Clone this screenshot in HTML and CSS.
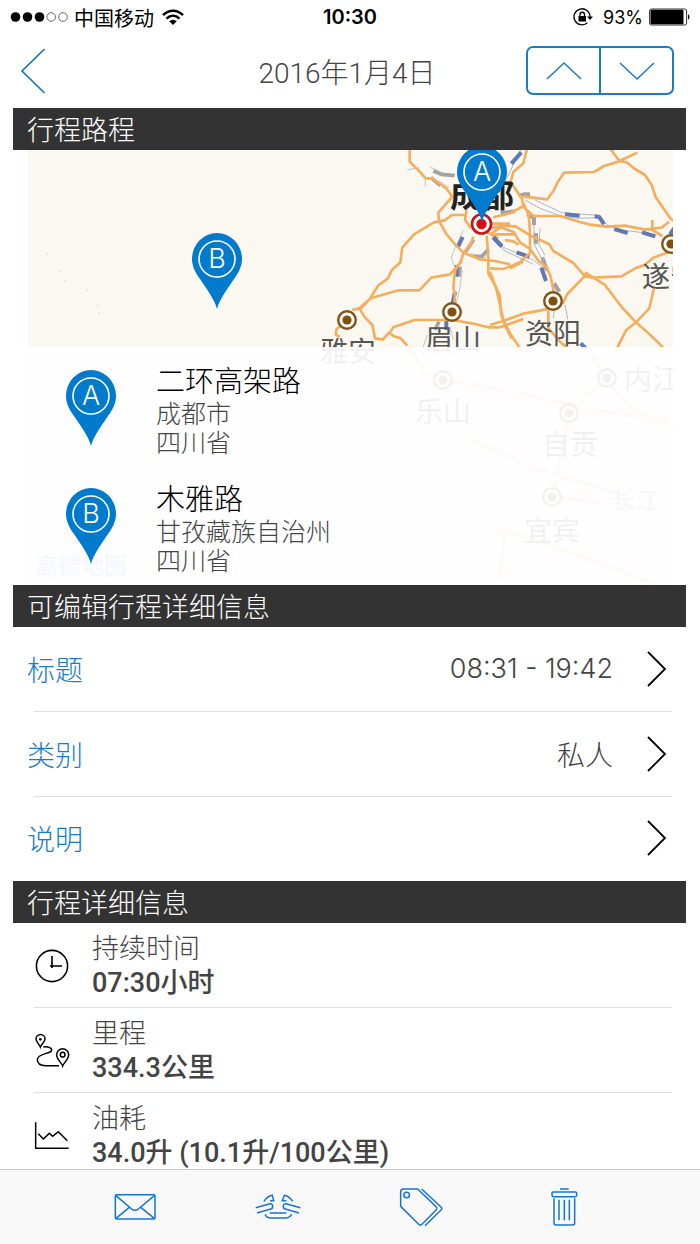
FILE: index.html
```
<!DOCTYPE html>
<html lang="zh-CN">
<head>
<meta charset="utf-8">
<meta name="viewport" content="width=device-width, initial-scale=1">
<title>2016年1月4日</title>
<link rel="stylesheet" href="styles.css">
</head>
<body>
<svg width="0" height="0" class="defs" aria-hidden="true">
  <symbol id="pin" viewBox="0 0 52 78"><path d="M26 77C24 68 15 56 9 47C4 40 1 34 1 27A25 26 0 0 1 51 27C51 34 48 40 43 47C37 56 28 68 26 77Z" fill="#007acc"/><circle cx="26" cy="27" r="18" fill="none" stroke="#fff" stroke-width="1.6"/></symbol>
  <symbol id="town" viewBox="-11 -11 22 22"><circle r="8.8" fill="#fffdf5" stroke="#80551d" stroke-width="2.4"/><circle r="4.6" fill="#80500f"/></symbol>
  <symbol id="chevron" viewBox="0 0 20 36"><path d="M1 1L18 18L1 35" fill="none" stroke="currentColor" stroke-width="1.8"/></symbol>
</svg>
<div class="app">
  <div class="status">
    <div class="status-left">
      <svg width="60" height="12" viewBox="0 0 60 12"><circle cx="5.5" cy="6" r="4.8"/><circle cx="17.5" cy="6" r="4.8"/><circle cx="29.5" cy="6" r="4.8"/><circle cx="41.2" cy="6" r="4.3" fill="none" stroke="#444" stroke-width=".8"/><circle cx="53" cy="6" r="4.3" fill="none" stroke="#444" stroke-width=".8"/></svg>
      <span>中国移动</span>
      <svg class="wifi" width="22" height="17" viewBox="0 0 22 17" fill="none" stroke="#000" stroke-width="2.5"><path d="M1 6.2C7 .2 15 .2 21 6.2M4.5 9.6C8.500 5.800 13.500 5.800 17.500 9.600"/><path d="M7.200 12.300Q11 9 14.800 12.300L11 16Z" fill="#000" stroke="none"/></svg>
    </div>
    <span class="clock">10:30</span>
    <div class="status-right">
      <svg width="20" height="18" viewBox="0 0 20 18" fill="none" stroke="#000" stroke-width="1.3"><path d="M14.500 14.600A8 8 0 1 1 17 9"/><path d="M14 8.500h6L17 12Z" fill="#000" stroke="none"/><rect x="5.500" y="8" width="7.500" height="5.500" fill="#000" stroke="none"/><path d="M7 8V6.500a2.250 2.250 0 0 1 4.500 0V8"/></svg>
      <span>93%</span>
      <svg width="42" height="18" viewBox="0 0 42 18"><rect x=".6" y="1" width="37" height="16" rx="2" fill="none" stroke="#333"/><rect x="1.500" y="1.800" width="33" height="14.400" rx="1"/><path d="M39 6q3 3 0 6Z"/></svg>
    </div>
  </div>
  <header class="nav">
    <button class="back" aria-label="返回"><svg width="26" height="46" viewBox="0 0 26 46"><path d="M24.500 1L2 23L24.500 45" fill="none" stroke="currentColor" stroke-width="1.600"/></svg></button>
    <h1>2016年1月4日</h1>
    <div class="stepper">
      <button aria-label="上一个"><svg width="36" height="20" viewBox="0 0 36 20"><path d="M1 18L18 2L35 18" fill="none" stroke="currentColor" stroke-width="1.500"/></svg></button>
      <button aria-label="下一个"><svg width="36" height="20" viewBox="0 0 36 20"><path d="M1 2L18 18L35 2" fill="none" stroke="currentColor" stroke-width="1.500"/></svg></button>
    </div>
  </header>
  <main>
    <section>
      <h2>行程路程</h2>
      <div class="route">
        <svg class="map" viewBox="28 150 645 435" preserveAspectRatio="xMidYMin slice" role="img" aria-label="路线地图">
          <rect x="28" y="150" width="645" height="435" fill="#faf8f1"/>
          <g transform="translate(320 145) scale(.3333)" fill="none" stroke-linejoin="round">
            <g stroke="#a5a8ad" stroke-width="2"><path d="M262 74l38-5M316 102v22M330 66l38 18M358 108l30 20M430 255l-24 52-12 30 8 25 25 15-8 55-14 58M452 325l42 14 16-22M322 570l-14 40M390 545l10 40"/></g>
            <g stroke="#a3a3a3" stroke-width="11"><path d="M340 78l24 10 40 4M333 98l28 24M461 284l-24 36M504 314l-18 20h-26M420 365l-3 30M357 530l-12 25"/></g>
            <g stroke="#6079b4" stroke-width="12"><path d="M428 276l-14 30M410 360v35M405 440l-7 35M379 525v30M520 278l25 26"/></g>
            <g stroke="#f3ae5f" stroke-width="8"><path d="M269 0v50l30 30 18 20h20l42 30 18 25-42 48 2 25 23 40 25 30 25 25 50 20 45 5 45 10M570 370l40-20"/><path d="M440 210h-44l-22 16-32 6-60 36-35 40-6 44-26 24-12 25-28 20-25 40-29 32M118 490l34-30 42-12 42-12h62l36-38 56-10 18-20 18-20M460 275l-6 20-23 28-9 27-16 25-4 30-2 25 5 20-4 65M440 195l-5 30 18 25M500 272l5 65v48l20 35 14 30 4 55 12 36 20 40M397 525l58 10 50 12h35l70-25M397 525h-113l-38 13-25 8-13 18 14 10 20 6 20 22M118 490l15 25 24 25 8 40 24 4 18-22M118 490l-22 5M65 540l-15 12-3 16 12 8M508 250l60-12M516 236h54M524 268h60M500 260l35 20"/></g>
          </g>
          <g transform="translate(490 145) scale(.3333)" fill="none" stroke-linejoin="round">
            <g stroke="#8994a9" stroke-width="2"><path d="M92 15L50 100M105 165l45 25 70 26 50 4 60-2M135 165l80 38 48 4 62 4 28 30 35 14 48 5 60 9M10 272l30 35 90 38 35 28M5 280l40 38 86 40M132 230v65l22 45 15 10M150 250l-3 50 18 30M195 485l-5 35M225 480l8 42"/></g>
            <g stroke="#6079b4" stroke-width="12"><path d="M94 22L64 56M225 208l44 4M314 214l14 2 14 22M373 252l40 12M456 262l40 12M10 276l26 28M80 322l38 14M154 368l14 40M272 595l18 18M540 268l14-20"/></g>
            <g stroke="#a3a3a3" stroke-width="12"><path d="M32 205l42-6M86 152l16-4h18M112 208l20 12v20M138 264v32M157 337l14 40M192 415l16 25"/></g>
            <g stroke="#f3ae5f" stroke-width="8"><path d="M110 15l-10 40-30 26-8 30 34 50 4 22-40 22-50 12M100 155l72 8 20-28 10-22 20-30 90-2 30-18 40-12 60-28M360 10l28 38 22 4 25 20 30 18 20 30 12 36 45 65 30 20M100 185l30 28h80l60 18 30 8 50 6 55-3 60 12 50-6 22-18M487 225v30l30 18M100 175l16 34 4 50v65l-30 28-50 20-40-2M28 240l50 5 40 25 60 28 12 20 60 36 35 40 24 4 85-4 42-24 28-10 26-22 55-20M0 270l32-24 40 16 18 30 30 20 25 35 25 20 12 28 10 50M45 285l25 4 15 10M292 385l-60 62-14 30M185 490l-85 16-60 22-40 12M0 380l20 55 10 45 10 45 20 40 40 60M285 382l60 38 50 66 42 45 30 26 52 50M492 430l-14 60-40 42-30 24-30 60M175 480v70l40 45 30 25"/></g>
          </g>
          <g fill="#e4e2dc"><circle cx="47" cy="254" r="1"/><circle cx="60" cy="271" r="1"/><circle cx="65" cy="281" r="1"/><circle cx="87" cy="290" r="1"/><circle cx="98" cy="306" r="1"/><circle cx="99" cy="313" r="1"/></g>
          <g fill="none" stroke="#f3d49b" stroke-width="4"><path d="M410 347l15 28 18 5 60 10 90 20 75 10M590 350l15 28 20 24 30 20 18 4M607 378l-38 34-16 85 100 12M470 440l70 30 80 24M500 580l5-50 60 20 90 34"/></g>
          <g class="places">
            <text class="capital" x="450" y="207">成都</text><text x="320" y="362">雅安</text><text x="425" y="350">眉山</text><text x="525" y="344">资阳</text><text x="642" y="287">遂宁</text>
            <text x="415" y="422">乐山</text><text x="624" y="390">内江</text><text x="542" y="455">自贡</text><text x="524" y="541">宜宾</text><text class="river" x="611" y="509">长江</text>
            <text class="brand" x="35" y="574">高德地图</text>
          </g>
          <use href="#town" x="336" y="309" width="22" height="22"/><use href="#town" x="441" y="301" width="22" height="22"/><use href="#town" x="542" y="290" width="22" height="22"/><use href="#town" x="660" y="233" width="22" height="22"/>
          <use href="#town" x="432" y="369" width="22" height="22"/><use href="#town" x="596" y="367" width="22" height="22"/><use href="#town" x="558" y="402" width="22" height="22"/><use href="#town" x="541" y="486" width="22" height="22"/>
          <circle cx="481.500" cy="224" r="9.500" fill="#fff" stroke="#c9131a" stroke-width="2.600"/><circle cx="481.500" cy="224" r="5.200" fill="#d80c14"/>
          <use href="#pin" x="456" y="145" width="52" height="78"/><text class="pin-letter" x="482" y="181">A</text>
          <use href="#pin" x="191" y="232" width="52" height="78"/><text class="pin-letter" x="217" y="268">B</text>
        </svg>
        <ol class="stops">
          <li><svg width="52" height="78" viewBox="0 0 52 78"><use href="#pin" width="52" height="78"/><text class="pin-letter" x="26" y="36">A</text></svg>
            <div><strong>二环高架路</strong><span>成都市</span><span>四川省</span></div></li>
          <li><svg width="52" height="78" viewBox="0 0 52 78"><use href="#pin" width="52" height="78"/><text class="pin-letter" x="26" y="36">B</text></svg>
            <div><strong>木雅路</strong><span>甘孜藏族自治州</span><span>四川省</span></div></li>
        </ol>
      </div>
    </section>
    <section>
      <h2>可编辑行程详细信息</h2>
      <div class="rows">
        <button class="row"><span class="label">标题</span><span class="value time">08:31 - 19:42</span><svg width="20" height="36"><use href="#chevron"/></svg></button>
        <button class="row"><span class="label">类别</span><span class="value">私人</span><svg width="20" height="36"><use href="#chevron"/></svg></button>
        <button class="row"><span class="label">说明</span><span class="value"></span><svg width="20" height="36"><use href="#chevron"/></svg></button>
      </div>
    </section>
    <section>
      <h2>行程详细信息</h2>
      <dl class="details">
        <div class="detail"><svg width="36" height="36" viewBox="0 0 36 36" fill="none" stroke="#000" stroke-width="1.600"><circle cx="18" cy="18" r="15.600"/><path d="M18 8v12M16 18h12"/></svg><dt>持续时间</dt><dd>07:30小时</dd></div>
        <div class="detail"><svg width="36" height="36" viewBox="103 68 108 108" fill="none" stroke="#000" stroke-width="4.500"><path d="M122 110C119 102 109 95 109 86a13.500 13.500 0 0 1 27 0C136 95 125 102 122 110ZM189 167C185 156 171 147 171 133a18 18 0 0 1 36 0C207 147 193 156 189 167Z"/><circle cx="122" cy="87" r="4" fill="#000" stroke="none"/><circle cx="189" cy="133" r="7"/><path d="M131 110C146 108 159 113 155 122C150 130 114 130 113 147C113 160 123 166 138 166H178"/></svg><dt>里程</dt><dd>334.3公里</dd></div>
        <div class="detail"><svg width="36" height="36" viewBox="104 320 108 108" fill="none" stroke="#000" stroke-width="4.500"><path d="M109 333V411H208M117 367l15 16 18-17 10 9 17-14 27 27"/></svg><dt>油耗</dt><dd>34.0升 (10.1升/100公里)</dd></div>
      </dl>
    </section>
  </main>
  <nav class="tools">
    <button aria-label="邮件"><svg width="44" height="30" viewBox="100 81 132 90"><rect x="107" y="89" width="119" height="73" rx="4"/><path d="M108 91L156 132Q166 140 176 132L225 91M109 160L149 127M224 160L183 127"/></svg></button>
    <button aria-label="合并"><svg width="48" height="30" viewBox="524 79 144 90"><path d="M554 107Q564 92 579 89L583 105H572M640 107Q630 92 615 89L609 105H621M529 126L572 114C582 113 583 128 574 130L533 142M663 126L620 114C610 113 609 128 618 130L659 142M571 142H621M557 146Q562 157 574 157H618Q630 157 637 146"/></svg></button>
    <button aria-label="标签"><svg width="46" height="42" viewBox="114 61 138 126"><path d="M122 79Q122 70 131 70H173L229 124Q232 128 229 132L186 176Q181 181 176 176L122 122ZM185 70L243 124Q248 129 243 133L195 180"/><circle cx="140" cy="88" r="8.500"/></svg></button>
    <button aria-label="删除"><svg width="30" height="42" viewBox="571 61 90 126"><path d="M604 70H630M586 98V172Q586 178 593 178H641Q648 178 648 172V98M601 102V164M617 102V164M632 102V164"/><rect x="580" y="79" width="74" height="14" rx="4"/></svg></button>
  </nav>
</div>
</body>
</html>
```
FILE: styles.css
```
* { box-sizing: border-box; }
body {
  margin: 0;
  background: #fff;
  color: #444;
  font-family: Roboto, "Noto Sans CJK SC", sans-serif;
  font-weight: 300;
}
button {
  margin: 0;
  padding: 0;
  border: 0;
  background: none;
  color: inherit;
  font: inherit;
}
svg { flex: none; display: block; }
.defs { position: absolute; }
.app { display: flex; flex-direction: column; height: 100vh; }

.status {
  display: grid;
  grid-template-columns: 1fr auto 1fr;
  align-items: center;
  height: 36px;
  padding: 0 10px 2px;
  color: #000;
  font-family: Inter, "Noto Sans CJK SC", sans-serif;
  font-size: 18px;
  font-weight: 400;
}
.status-left, .status-right { display: flex; align-items: center; }
.status-left { gap: 4px; font-size: 20px; }
.wifi { margin-left: 4px; }
.status-right { justify-content: flex-end; gap: 8px; }
.status-right svg:first-child { margin-right: 2px; }
.status-right svg:last-child { margin-right: -1px; margin-left: -2px; }
.clock { font-size: 20px; font-weight: 600; }

.nav {
  display: grid;
  grid-template-columns: 1fr auto 1fr;
  align-items: center;
  height: 72px;
  flex: none;
  padding: 0 26px 3px 20px;
}
.nav h1 { margin: 0; font-size: 28px; font-weight: 300; }
.back { justify-self: start; color: #0f74bc; }
.stepper {
  display: flex;
  justify-self: end;
  width: 148px;
  height: 49px;
  border: 2px solid #1b7cc2;
  border-radius: 7px;
  color: #1b7cc2;
}
.stepper button { flex: 1; display: grid; place-items: center; }
.stepper button + button { border-left: 2px solid #1b7cc2; }

main { flex: 1; min-height: 0; overflow-y: auto; scrollbar-width: none; }
section { padding: 0 14px 0 13px; }
h2 {
  margin: 0;
  padding: 4px 0 0 14px;
  background: #333;
  color: #fff;
  font-size: 27px;
  font-weight: 300;
  line-height: 38px;
}

.route { position: relative; margin: 0 13px 0 15px; padding-top: 197px; }
.map { position: absolute; inset: 0; width: 100%; height: 100%; }
.places { fill: #555; font-size: 28px; font-weight: 400; }
.capital { fill: #222; font-size: 32px; font-weight: 700; }
.river { fill: #8fa0b5; font-size: 24px; }
.brand { fill: #8fb0d0; font-size: 23px; font-weight: 700; }
.pin-letter { fill: #fff; font-size: 27px; font-weight: 300; text-anchor: middle; font-family: Inter, sans-serif; }
.stops {
  position: relative;
  margin: 0;
  padding: 0 0 2px;
  list-style: none;
  background: rgba(254, 254, 255, .92);
}
.stops li { display: flex; gap: 39px; height: 118px; padding: 17px 0 0 37px; }
.stops li > svg { margin-top: 5px; }
.stops strong, .stops span { display: block; }
.stops strong { color: #000; font-size: 29px; font-weight: 300; line-height: 36px; }
.stops span { font-size: 25px; line-height: 29px; }

.row {
  display: flex;
  align-items: center;
  width: 100%;
  height: 85px;
  padding: 0 19px 2px 14px;
  font-size: 28px;
  text-align: left;
  background: linear-gradient(#dcdcdc, #dcdcdc) 21px 100% / calc(100% - 35px) 1px no-repeat;
}
.row:last-child { height: 84px; background: none; }
.label { color: #1b7cc2; }
.value { flex: 1; padding-right: 34px; text-align: right; }
.time { font-family: Inter, sans-serif; font-size: 27px; }
.row svg { color: #000; }

.details { margin: 0; padding: 0 14px 0 21px; }
.detail {
  display: grid;
  grid-template-columns: 36px 1fr;
  grid-template-rows: 34px 34px;
  column-gap: 22px;
  align-items: center;
  padding: 9px 0 7px;
  border-bottom: 1px solid #dcdcdc;
}
.detail:last-child { border-bottom: 0; }
.detail svg { grid-row: 1 / 3; }
.detail dt, .detail dd { margin: 0; font-size: 27px; line-height: 34px; }
.detail dd { font-weight: 500; }

.tools {
  display: grid;
  grid-template-columns: repeat(4, 1fr);
  flex: none;
  height: 75px;
  padding: 0 65px 0 63px;
  border-top: 1px solid #c8c8c8;
  background: #f8f8f8;
}
.tools button { display: grid; place-items: center; }
.tools svg { fill: none; stroke: #1674cf; stroke-width: 4.5; }
```
